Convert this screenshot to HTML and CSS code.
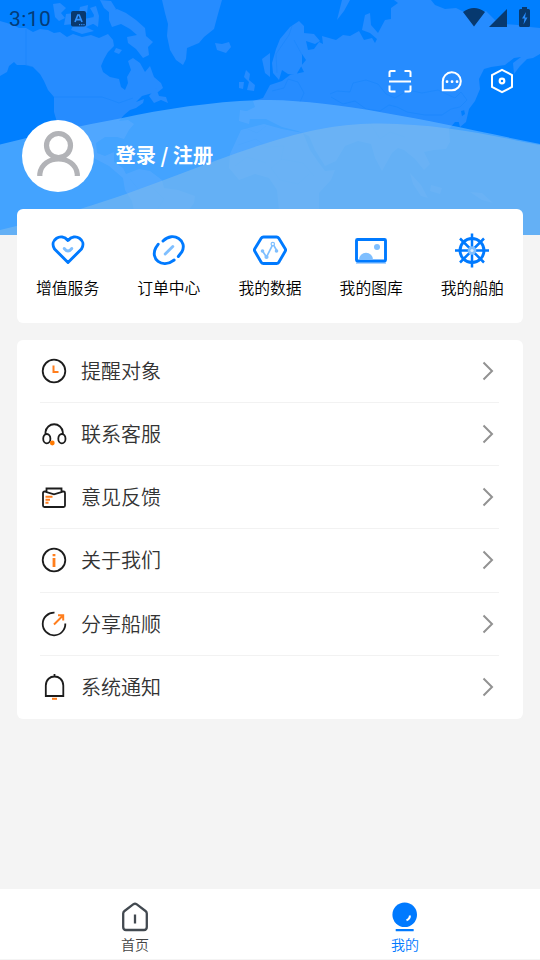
FILE: index.html
```html
<!DOCTYPE html>
<html lang="zh-CN">
<head>
<meta charset="utf-8">
<title>我的</title>
<link rel="stylesheet" href="styles.css">
</head>
<body>
<div class="app">
  <header class="hero">
    <svg class="hero-map" width="540" height="235" viewBox="0 0 540 235" aria-hidden="true">
      <rect width="540" height="235" fill="#007fff"/>
      <g fill="#268cff">
        <path d="M0 21 7 23 15 26 19 28 26 28 33 32 40 29 48 30 54 33 60 32 67 37 73 34 82 37 91 35 99 38 108 34 113 40 114 46 108 52 104 59 101 66 103 72 110 77 119 79 121 87 125 90 128 83 127 77 131 70 128 61 133 58 140 63 145 72 150 66 154 77 161 83 163 88 158 92 149 94 142 96 136 102 144 99 143 103 136 108 130 110 124 115 119 121 128 120 134 124 129 130 124 139 117 137 105 137 96 143 97 153 105 156 114 152 114 162 123 168 126 174 139 169 150 171 162 180 164 188 178 190 195 196 194 203 188 211 134 211 132 201 125 190 123 178 109 166 88 155 70 143 59 129 54 112 54 97 48 90 44 81 40 74 33 67 25 65 17 65 14 62 9 66 7 72 0 76Z"/>
        <path d="M53 4 60 3 66 8 61 13 65 18 59 21 55 17ZM66 14 75 13 84 19 94 17 95 23 86 27 94 31 82 34 71 30 74 24 64 25ZM80 7 88 5 87 13 79 12ZM90 8 96 6 99 16 98 27 92 23 94 15ZM100 0 111 1 116 9 110 13 104 8ZM109 12 117 9 126 13 136 20 145 28 146 36 153 42 148 47 149 55 143 58 136 49 128 43 127 37 137 35 130 29 121 24 112 27 109 20ZM116 48 122 50 119 54 114 52ZM149 96 156 88 159 96 166 97 168 103 161 100 154 103Z"/>
        <path d="M162 0 165 13 168 24 167 36 170 50 176 60 183 65 186 59 187 48 199 43 204 37 214 29 218 14 222 0Z"/>
        <path d="M215 43 222 44 229 42 231 47 226 53 217 50ZM246 70 250 74 249 80 255 85 254 91 247 90 249 82 244 77ZM239 82 244 82 243 89 239 88Z"/>
        <path d="M262 59 270 53 270 77 265 73ZM272 63 276 49 280 39 290 27 299 21 304 26 304 33 314 34 320 41 315 44 306 41 308 50 314 49 319 42 323 44 322 36 336 40 343 35 350 36 359 31 364 40 372 38 375 43 377 39 370 33 362 30 365 15 370 13 371 25 378 33 385 20 391 19 391 8 398 3 394 0 431 0 435 5 445 9 456 8 464 12 474 15 486 11 495 20 505 24 518 25 530 27 540 28 540 54 533 58 527 59 520 66 514 74 513 63 521 57 514 58 505 65 491 67 484 69 479 79 480 89 475 101 469 109 461 111 463 122 455 122 449 129 450 142 446 149 434 150 424 152 430 164 424 170 415 159 404 150 398 148 392 153 382 171 375 158 371 144 358 141 345 146 336 161 325 166 315 150 309 136 298 131 282 127 266 119 249 119 245 112 255 107 253 101 263 98 270 85 282 81 290 75 304 72 301 66 306 60 302 54 302 65 296 75 288 74 282 70 279 80 273 73Z"/>
        <path d="M230 154 241 130 264 124 282 129 303 133 310 150 319 163 325 171 335 170 331 180 319 193 319 211 279 211 277 190 269 178 255 174 239 180 229 168ZM240 110 251 112 249 124 239 121ZM337 20 342 0 350 0 344 11ZM463 105 469 109 466 122 460 127 458 119 465 114ZM431 185 442 188 440 194 430 191ZM410 173 421 185 428 198 421 196 413 184ZM470 192 482 193 493 203 482 200Z"/>
      </g>
      <g class="borders" fill="none" stroke="#0f82f8" stroke-opacity=".35" stroke-width="1">
        <path d="M26 29V65L33 67M54 97H102L111 100 119 103 133 98M330 94 337 91 350 92 353 83 366 80 378 84 386 94 395 98 408 90 422 93 438 90 455 98 461 92 467 100 460 107 451 109 442 115 425 115 407 112 397 107 389 105 380 111 366 109 355 101 343 104 331 97M277 73 276 54 289 35 292 26M302 55 294 40M272 91 284 88 288 79 298 82 304 93 300 102M238 145 256 139 267 147 284 146 281 159 303 163 314 176M282 159 271 168 280 180 298 184 309 174M370 123 380 139 390 132 405 137"/>
        <path d="M130 179 139 190 152 187 164 199 157 210M235 166 247 157 266 163M243 127 257 133 266 126"/>
      </g>
      <path d="M0 144.500Q57 130 120 118.500C168 108 225 100 270 100C345 101 442 124 540 144V235H0Z" fill="#69b7ff" fill-opacity=".64"/>
      <path d="M0 230Q42 220 80 209C146 189 220 157 270 142C315 128 345 123.500 380 123.500C438 124 485 134 540 145V235H0Z" fill="#80bced" fill-opacity=".55"/>
    </svg>
    <div class="status">
      <span class="clock">3:10</span>
      <svg class="status-app" width="15" height="16" viewBox="0 0 15 16"><rect width="15" height="15.500" rx="2" fill="#09396f"/><path d="M4 11 6.800 4H8.200L11 11M5 8.700H10" fill="none" stroke="#2f91ff" stroke-width="1.700"/><path d="M8 13.700H14" stroke="#2f91ff" stroke-width="1.200" stroke-dasharray="1.200 1"/></svg>
      <svg class="status-icons" width="68" height="22" viewBox="0 0 68 22" fill="#07396f"><path d="M0 5Q11-3 22 5L11 19.500ZM26 20 44 2V20Z"/><path d="M56 3.500Q56 2 57.500 2H59V0H64V2H65.500Q67 2 67 3.500V18.500Q67 20 65.500 20H57.500Q56 20 56 18.500Z"/><path d="M63 5 59 11.500H61.500L60.500 17.500 64.500 10.500H62Z" fill="#268cff"/></svg>
    </div>
    <div class="tools">
      <svg width="24" height="24" viewBox="0 0 24 24"><path d="M1.500 8V3.500Q1.500 2 3 2H7.500M16.500 2H21Q22.500 2 22.500 3.500V8M1.500 16.500V21Q1.500 22.500 3 22.500H7.500M16.500 22.500H21Q22.500 22.500 22.500 21V16.500M1 12.500H23"/></svg>
      <svg width="22" height="24" viewBox="0 0 22 24"><path d="M1.800 12.500A9 9 0 1 1 11 21.300H1.800Z"/><path d="M6 12.700H16.500" stroke-width="2.700" stroke-linecap="round" stroke-dasharray=".1 4.900"/></svg>
      <svg width="24" height="26" viewBox="0 0 24 26"><path d="M12 1.800 22 7V19L12 24.200 2 19V7Z"/><circle cx="12" cy="13" r="2.300" stroke-width="2.200"/></svg>
    </div>
    <div class="profile">
      <span class="avatar"><svg width="72" height="72" viewBox="0 0 72 72" fill="none" stroke="#b2b3b7" stroke-width="5.200"><circle cx="36.500" cy="25.500" r="12"/><path d="M17.800 56V54C20 34 53 34 55.300 54V56"/></svg></span>
      <span class="login">登录 / 注册</span>
    </div>
  </header>

  <section class="services">
    <div class="service"><svg width="36" height="36" viewBox="0 0 36 36"><path d="M18 30.500 4.500 17C-1 8 11 0 18 8.500 25 0 37 8 31.500 17Z" stroke-linejoin="round"/><path d="M14.200 16.500Q18 21.500 21.800 16.500" stroke="#7fbfff" stroke-linecap="round"/></svg><span>增值服务</span></div>
    <div class="service"><svg width="36" height="36" viewBox="0 0 36 36"><path d="M7.200 12.200 4.800 15.800C-1 26.500 10.500 37.500 23.200 28M12 9C22.500-1.500 37 9 30.800 20L27.300 24.500" stroke-linecap="round"/><path d="m14.200 22 7.600-7.500" stroke="#7fbfff" stroke-linecap="round"/></svg><span>订单中心</span></div>
    <div class="service"><svg width="36" height="36" viewBox="0 0 36 36"><path d="M11.500 5H24.500Q26 5 26.800 6.300L33.200 16.700Q34 18 33.200 19.300L26.800 30.200Q26 31.500 24.500 31.500H11.500Q10 31.500 9.200 30.200L2.800 19.300Q2 18 2.800 16.700L9.200 6.300Q10 5 11.500 5Z"/><path d="m10.500 19 4 6 6.500-13 4 7" stroke="#7fbfff" stroke-width="1.700"/><g fill="#7fbfff" stroke="none"><circle cx="10.500" cy="19" r="1.800"/><circle cx="14.500" cy="25" r="2.100"/><circle cx="24.500" cy="19" r="1.800"/></g><circle cx="20.800" cy="12" r="1.700" fill="#fff" stroke="#7fbfff" stroke-width="1.200"/></svg><span>我的数据</span></div>
    <div class="service"><svg width="36" height="36" viewBox="0 0 36 36"><path d="M3 30.500H33" stroke="#a8d2ff"/><rect x="3.500" y="7.500" width="29" height="21.500" rx="1"/><path d="M6 27.700A7 7 0 0 1 20 27.700Z" fill="#7fbfff" stroke="none"/><circle cx="24" cy="15" r="3" fill="#7fbfff" stroke="none"/></svg><span>我的图库</span></div>
    <div class="service"><svg width="36" height="36" viewBox="0 0 36 36"><circle cx="18" cy="18.500" r="12"/><path d="M18 1.500V35.500M1 18.500H35M6 6.500 30 30.500M30 6.500 6 30.500" stroke-width="2.500"/><circle cx="18" cy="18.500" r="4.300" fill="#7fbfff" stroke="none"/><circle cx="18" cy="18.500" r="1.600" fill="#d8ecff" stroke="none"/></svg><span>我的船舶</span></div>
  </section>

  <section class="menu">
    <div class="row"><svg class="row-icon" viewBox="0 0 26 26"><circle cx="13" cy="13" r="11.300"/><path class="accent" d="M12.500 7.500V14H17.500"/></svg><span>提醒对象</span><svg class="arrow" viewBox="0 0 12 20"><path d="m1.500 1.500 8.500 8.500-8.500 8.500"/></svg></div>
    <div class="row"><svg class="row-icon" viewBox="0 0 26 26"><path d="M4.500 13V11A8.700 8.700 0 0 1 21.800 11V13"/><ellipse cx="5.800" cy="17.700" rx="3.600" ry="4.700"/><ellipse cx="20.900" cy="17.700" rx="3.600" ry="4.700"/><circle cx="11.300" cy="22" r="2.400" fill="#ff7900" stroke="none"/></svg><span>联系客服</span><svg class="arrow" viewBox="0 0 12 20"><path d="m1.500 1.500 8.500 8.500-8.500 8.500"/></svg></div>
    <div class="row"><svg class="row-icon" viewBox="0 0 26 26"><rect x="2" y="7.500" width="22" height="15.500" rx="1.500"/><path d="M5.500 8V4.500H20.500V8L13 10.300Z" fill="#fff"/><path class="accent" d="M4.500 12.800H11.500M4.500 15.800H9M4.500 18.800H7.500"/></svg><span>意见反馈</span><svg class="arrow" viewBox="0 0 12 20"><path d="m1.500 1.500 8.500 8.500-8.500 8.500"/></svg></div>
    <div class="row"><svg class="row-icon" viewBox="0 0 26 26"><circle cx="13" cy="13" r="11.300"/><path class="accent bold" d="M13 11V20M13 7V9.200"/></svg><span>关于我们</span><svg class="arrow" viewBox="0 0 12 20"><path d="m1.500 1.500 8.500 8.500-8.500 8.500"/></svg></div>
    <div class="row"><svg class="row-icon" viewBox="0 0 26 26"><path d="M13.500 1.700A11.300 11.300 0 1 0 24.300 12.500"/><path class="accent" d="M13 13.500 22 4.500M17 4.300H22.200V9.500"/></svg><span>分享船顺</span><svg class="arrow" viewBox="0 0 12 20"><path d="m1.500 1.500 8.500 8.500-8.500 8.500"/></svg></div>
    <div class="row"><svg class="row-icon" viewBox="0 0 26 26"><path d="M4.800 22V11.500C5-.5 22-.5 22.300 11.500V22ZM13.500 2.500V0"/><path class="accent" d="M11 24.800H16"/></svg><span>系统通知</span><svg class="arrow" viewBox="0 0 12 20"><path d="m1.500 1.500 8.500 8.500-8.500 8.500"/></svg></div>
  </section>

  <nav class="tabs">
    <div class="tab"><svg width="32" height="32" viewBox="0 0 32 32" fill="none" stroke="#424950" stroke-width="2.300"><path d="M4.200 12.500Q4.200 11 5.500 10L14.500 3.200Q16 2.200 17.500 3.200L26.500 10Q27.800 11 27.800 12.500V26Q27.800 29 25 29H7Q4.200 29 4.200 26Z"/><path d="M16 13.500V22.500"/></svg><span>首页</span></div>
    <div class="tab active"><svg width="32" height="32" viewBox="0 0 32 32" fill="#007aff"><circle cx="15.700" cy="13.700" r="12.300"/><path d="M20.900 14.500Q21 18 17.500 19.200" fill="none" stroke="#fff" stroke-width="2"/><rect x="6.700" y="28" width="18" height="2.200" rx=".5"/></svg><span>我的</span></div>
  </nav>
</div>
</body>
</html>
```
FILE: styles.css
```css
* { box-sizing: border-box; }
body {
  margin: 0;
  background: #f4f4f4;
  font-family: "Noto Sans CJK SC", sans-serif;
  font-weight: 350;
  color: #333;
}
svg { display: block; flex: none; }
.app {
  width: 540px;
  height: 960px;
  display: flex;
  flex-direction: column;
  overflow: hidden;
}
.hero { position: relative; height: 209px; flex: none; }
.hero-map { position: absolute; top: 0; left: 0; }
.status {
  position: relative;
  display: flex;
  height: 36px;
  padding: 0 9px;
}
.clock {
  width: 62px;
  font: 400 21px/38px Roboto, sans-serif;
  letter-spacing: .4px;
  color: #043b78;
}
.status-app { margin-top: 10.5px; }
.status-icons { margin: 7px 0 0 auto; }
.tools {
  position: relative;
  display: flex;
  align-items: center;
  justify-content: flex-end;
  height: 84px;
  padding: 6px 26px 0 0;
}
.tools svg { fill: none; stroke: #fff; stroke-width: 2; }
.tools svg:nth-child(2) { margin-left: 29px; }
.tools svg:nth-child(3) { margin-left: 27px; }
.profile {
  position: relative;
  display: flex;
  align-items: center;
  gap: 21.5px;
  height: 72px;
  padding-left: 22px;
}
.avatar { border-radius: 50%; background: #fff; }
.login {
  margin-top: -2px;
  color: #fff;
  font-size: 20.2px;
  line-height: 30px;
  font-weight: 700;
}
.services {
  position: relative;
  display: grid;
  grid-template-columns: repeat(5, 1fr);
  flex: none;
  height: 114px;
  margin: 0 17px;
  padding-top: 23px;
  border-radius: 6px;
  background: #fff;
}
.service {
  display: flex;
  flex-direction: column;
  align-items: center;
  gap: 8px;
  font-size: 15.8px;
  line-height: 24px;
  color: #000;
}
.service svg { fill: none; stroke: #007aff; stroke-width: 2.9; }
.menu {
  flex: none;
  height: 379px;
  margin: 17px 17px 0;
  padding: 0 24px 0 23px;
  border-radius: 6px;
  background: #fff;
}
.row {
  display: flex;
  align-items: center;
  height: 63.15px;
  padding: 0 5px 0 1px;
  border-bottom: 1px solid #f2f2f2;
  font-size: 20px;
  line-height: 30px;
}
.row:last-child { border-bottom: 0; }
.row-icon {
  width: 26px;
  height: 26px;
  margin-right: 14px;
  fill: none;
  stroke: #1c1c1c;
  stroke-width: 1.8;
}
.row-icon .accent { stroke: #ff7e1d; stroke-width: 2; }
.row-icon .bold { stroke-width: 2.8; }
.arrow {
  width: 12px;
  height: 20px;
  margin-left: auto;
  fill: none;
  stroke: #929292;
  stroke-width: 2;
}
.tabs {
  display: grid;
  grid-template-columns: 1fr 1fr;
  height: 71px;
  flex: none;
  margin-top: auto;
  padding-top: 12px;
  border-bottom: 1px solid #f4f4f4;
  background: #fff;
}
.tab {
  display: flex;
  flex-direction: column;
  align-items: center;
  font-size: 14px;
  line-height: 22px;
  color: #444;
}
.tab.active { color: #007aff; }
```
